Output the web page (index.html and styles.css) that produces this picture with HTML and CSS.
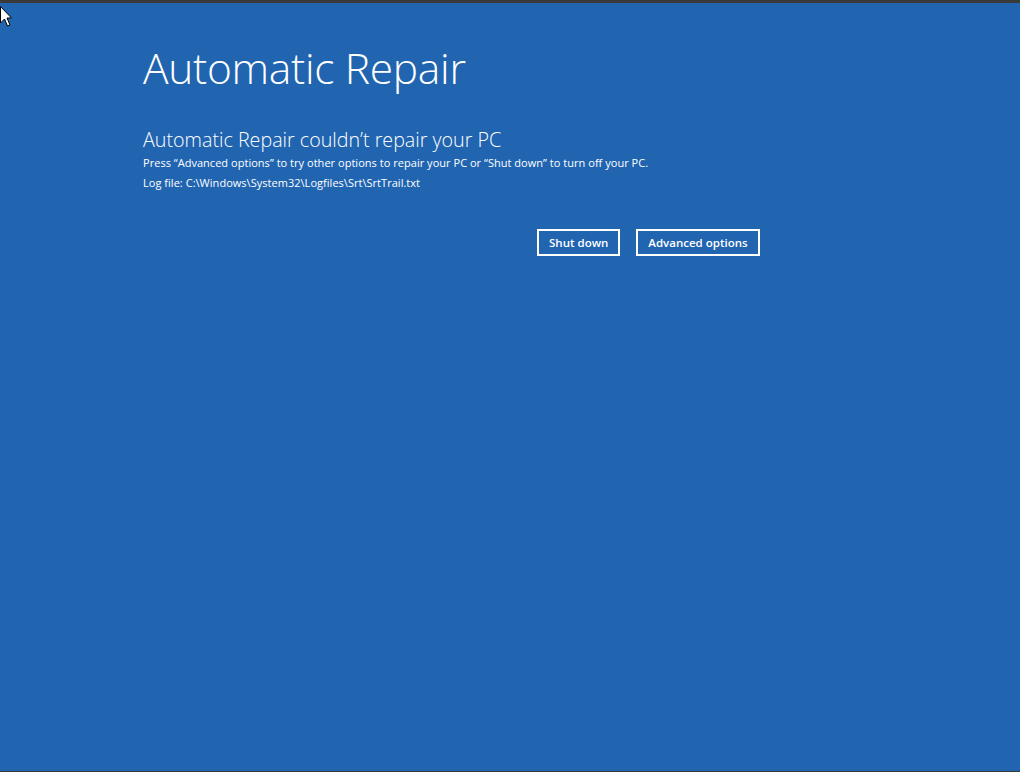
FILE: index.html
```html
<!DOCTYPE html>
<html lang="en">
<head>
    <meta charset="UTF-8">
    <title>Automatic Repair</title>
    <link rel="stylesheet" href="styles.css">
</head>
<body>
    <div class="screen">
        <div class="content">
            <h1 class="title">Automatic Repair</h1>

            <h2 class="subtitle">Automatic Repair couldn’t repair your PC</h2>
            <p class="info">Press “Advanced options” to try other options to repair your PC or “Shut down” to turn off your PC.</p>
            <p class="info log">Log file: C:\Windows\System32\Logfiles\Srt\SrtTrail.txt</p>

            <div class="actions">
                <button type="button" class="btn">Shut down</button>
                <button type="button" class="btn">Advanced options</button>
            </div>
        </div>
    </div>

    <!-- mouse pointer -->
    <svg class="cursor" width="12" height="22" viewBox="0 0 12 22">
        <path d="M0.5 0.5 L0.5 17 L4.5 13 L7.5 20 L10 19 L7 12 L11.5 12 Z" fill="#fff" stroke="#000" stroke-width="1"/>
    </svg>
</body>
</html>
```

FILE: styles.css
```css
* {
    margin: 0;
    padding: 0;
    box-sizing: border-box;
}

html, body {
    height: 100%;
}

body {
    background-color: #3a3a3a;
    padding-top: 3px;
    padding-bottom: 1px;
    font-family: "Open Sans", "Noto Sans", sans-serif;
    color: #fff;
    overflow: hidden;
}

.screen {
    height: 100%;
    background-color: #2165b1;
}

.content {
    padding: 35px 0 0 143px;
}

.title {
    font-size: 42.5px;
    font-weight: 300;
    line-height: 60px;
    letter-spacing: -0.3px;
}

.subtitle {
    margin-top: 29px;
    font-size: 19.7px;
    font-weight: 300;
    line-height: 26px;
}

.info {
    font-size: 11px;
    line-height: 20px;
    letter-spacing: 0.03px;
}

.actions {
    display: flex;
    gap: 16px;
    margin: 36px 0 0 394px;
}

.btn {
    height: 27px;
    padding: 0 10px;
    background: transparent;
    border: 2px solid #fff;
    color: #fff;
    font-family: "Open Sans", sans-serif;
    font-size: 11.5px;
    font-weight: 600;
}

.cursor {
    position: absolute;
    left: 0;
    top: 6px;
}
```
